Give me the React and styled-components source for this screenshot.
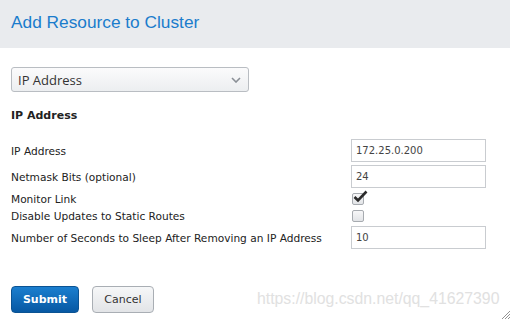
import React from 'react';
import styled, { createGlobalStyle } from 'styled-components';

const GlobalStyle = createGlobalStyle`
  html, body {
    margin: 0;
    padding: 0;
    background: #ffffff;
  }
  body {
    font-family: "DejaVu Sans", Verdana, sans-serif;
  }
`;

const App = () => {
  return (
    <Dialog>
      <GlobalStyle />
      <Header>
        <Title>Add Resource to Cluster</Title>
      </Header>
      <Body>
        <SelectBox>
          <span>IP Address</span>
          <svg width="10" height="6" viewBox="0 0 10 6">
            <path d="M1 1 L5 5 L9 1" fill="none" stroke="#8a8f96" strokeWidth="1.6" />
          </svg>
        </SelectBox>
        <SectionTitle>IP Address</SectionTitle>
        <Form>
          <Label>IP Address</Label>
          <TextInput>172.25.0.200</TextInput>
          <Label>Netmask Bits (optional)</Label>
          <TextInput>24</TextInput>
          <Label>Monitor Link</Label>
          <CheckCell>
            <Checkbox>
              <svg width="16" height="13" viewBox="0 0 16 13">
                <path d="M2.5 7 L6 10.5 L14.5 1.5" fill="none" stroke="#2b2b2b" strokeWidth="2.6" />
              </svg>
            </Checkbox>
          </CheckCell>
          <Label>Disable Updates to Static Routes</Label>
          <CheckCell>
            <Checkbox />
          </CheckCell>
          <Label>Number of Seconds to Sleep After Removing an IP Address</Label>
          <TextInput>10</TextInput>
        </Form>
        <Actions>
          <Button $primary>Submit</Button>
          <Button>Cancel</Button>
        </Actions>
      </Body>
      <Watermark>https://blog.csdn.net/qq_41627390</Watermark>
      <Grip width="8" height="9" viewBox="0 0 8 9">
        <path d="M8 1 L0 9 M8 4 L3 9 M8 7 L6 9" stroke="#777" strokeWidth="0.8" />
      </Grip>
    </Dialog>
  );
};

const Dialog = styled.div`
  position: relative;
  width: 510px;
  height: 319px;
  overflow: hidden;
  background: #ffffff;
`;

const Header = styled.div`
  height: 48px;
  background: #e9ebee;
  display: flex;
  align-items: center;
  padding: 0 11px;
`;

const Title = styled.h1`
  margin: 0;
  margin-top: -4px;
  font-family: "Liberation Sans", Arial, sans-serif;
  font-weight: normal;
  font-size: 17.3px;
  color: #1a7ccc;
`;

const Body = styled.div`
  padding: 19px 11px 0 11px;
`;

const SelectBox = styled.div`
  box-sizing: border-box;
  width: 238px;
  height: 25px;
  border: 1px solid #b9bdc2;
  border-radius: 3px;
  background: linear-gradient(#fbfbfc, #eceef0);
  display: flex;
  align-items: center;
  justify-content: space-between;
  padding: 0 7px 0 6px;
  font-family: "Open Sans", "Liberation Sans", sans-serif;
  font-size: 13px;
  color: #333;
`;

const SectionTitle = styled.h2`
  margin: 17px 0 0 0;
  font-family: "DejaVu Sans", Verdana, sans-serif;
  font-weight: bold;
  font-size: 11px;
  line-height: 14px;
  color: #222;
`;

const Form = styled.div`
  display: grid;
  grid-template-columns: 340px 135px;
  grid-template-rows: 23px 23px 15px 14px 23px;
  row-gap: 3px;
  margin-top: 16px;
`;

const Label = styled.div`
  display: flex;
  align-items: center;
  font-family: "DejaVu Sans", Verdana, sans-serif;
  font-size: 10.6px;
  color: #222;
  white-space: nowrap;
`;

const TextInput = styled.div`
  box-sizing: border-box;
  border: 1px solid #c9ccd0;
  background: #fff;
  display: flex;
  align-items: center;
  padding: 0 4px;
  font-family: "DejaVu Sans", Verdana, sans-serif;
  font-size: 10px;
  color: #444;
`;

const CheckCell = styled.div`
  display: flex;
  align-items: center;
  padding-left: 1px;
`;

const Checkbox = styled.div`
  position: relative;
  box-sizing: border-box;
  width: 12px;
  height: 12px;
  border: 1px solid #a7abb0;
  border-radius: 2px;
  background: linear-gradient(#f7f7f8, #e2e4e7);

  svg {
    position: absolute;
    left: -1px;
    top: -4px;
  }
`;

const Actions = styled.div`
  display: flex;
  gap: 13px;
  margin-top: 37px;
`;

const Button = styled.div`
  box-sizing: border-box;
  height: 27px;
  width: ${(p) => (p.$primary ? '68px' : '62px')};
  border-radius: 4px;
  display: flex;
  align-items: center;
  justify-content: center;
  font-family: "DejaVu Sans", Verdana, sans-serif;
  font-size: 11px;
  font-weight: ${(p) => (p.$primary ? 'bold' : 'normal')};
  color: ${(p) => (p.$primary ? '#ffffff' : '#333333')};
  border: 1px solid ${(p) => (p.$primary ? '#0b5393' : '#a9aeb4')};
  background: ${(p) =>
    p.$primary
      ? 'linear-gradient(#1b7fcf, #0758a3)'
      : 'linear-gradient(#f6f7f8, #e2e4e7)'};
`;

const Watermark = styled.div`
  position: absolute;
  left: 257px;
  top: 290px;
  font-family: "Liberation Sans", Arial, sans-serif;
  font-size: 15.8px;
  color: #e1e1e1;
  white-space: nowrap;
`;

const Grip = styled.svg`
  position: absolute;
  right: 0;
  bottom: 0;
`;

export default App;
